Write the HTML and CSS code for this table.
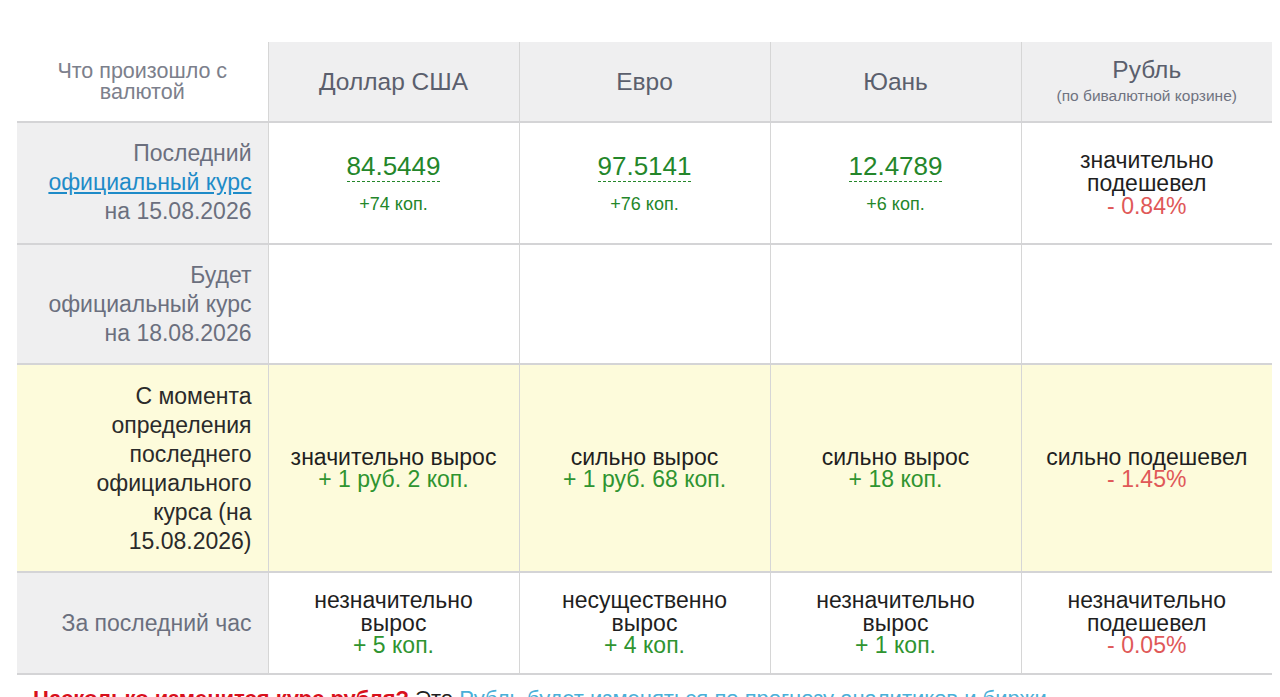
FILE: index.html
```html
<!DOCTYPE html>
<html lang="ru">
<head>
<meta charset="utf-8">
<link rel="stylesheet" href="styles.css">
</head>
<body>
<table class="rates">
  <thead>
    <tr>
      <th class="corner">Что произошло с<br>валютой</th>
      <th class="cur">Доллар США</th>
      <th class="cur">Евро</th>
      <th class="cur">Юань</th>
      <th class="cur">Рубль<span class="sub">(по бивалютной корзине)</span></th>
    </tr>
  </thead>
  <tbody>
    <tr class="row-last">
      <td class="label">Последний<br><a href="#" class="link">официальный курс</a><br>на 15.08.2026</td>
      <td class="val"><span class="rate">84.5449</span><span class="diff">+74 коп.</span></td>
      <td class="val"><span class="rate">97.5141</span><span class="diff">+76 коп.</span></td>
      <td class="val"><span class="rate">12.4789</span><span class="diff">+6 коп.</span></td>
      <td class="txt">значительно<br>подешевел<br><span class="down">- 0.84%</span></td>
    </tr>
    <tr class="row-next">
      <td class="label">Будет<br>официальный курс<br>на 18.08.2026</td>
      <td class="empty"></td>
      <td class="empty"></td>
      <td class="empty"></td>
      <td class="empty"></td>
    </tr>
    <tr class="row-since">
      <td class="label">С момента<br>определения<br>последнего<br>официального<br>курса (на<br>15.08.2026)</td>
      <td class="txt">значительно вырос<br><span class="up">+ 1 руб. 2 коп.</span></td>
      <td class="txt">сильно вырос<br><span class="up">+ 1 руб. 68 коп.</span></td>
      <td class="txt">сильно вырос<br><span class="up">+ 18 коп.</span></td>
      <td class="txt">сильно подешевел<br><span class="down">- 1.45%</span></td>
    </tr>
    <tr class="row-hour">
      <td class="label">За последний час</td>
      <td class="txt">незначительно<br>вырос<br><span class="up">+ 5 коп.</span></td>
      <td class="txt">несущественно<br>вырос<br><span class="up">+ 4 коп.</span></td>
      <td class="txt">незначительно<br>вырос<br><span class="up">+ 1 коп.</span></td>
      <td class="txt">незначительно<br>подешевел<br><span class="down">- 0.05%</span></td>
    </tr>
  </tbody>
</table>
<p class="note"><span class="warn">Насколько изменится курс рубля?</span> Это <a href="#" class="note-link">Рубль будет изменяться по прогнозу аналитиков и биржи</a></p>
</body>
</html>
```

FILE: styles.css
```css
html, body {
  margin: 0;
  padding: 0;
  background: #ffffff;
}

body {
  padding: 42px 0 0 17px;
  font-family: "Liberation Sans", Arial, sans-serif;
  overflow: hidden;
}

.rates {
  border-collapse: collapse;
  table-layout: fixed;
  width: 1255px;
}

.rates th,
.rates td {
  width: 251px;
  box-sizing: border-box;
  text-align: center;
  vertical-align: middle;
  border-left: 1px solid #d6d6d6;
  border-bottom: 2px solid #d4d4d6;
}

.rates tr > :first-child {
  border-left: none;
}

.rates th.corner {
  background: #ffffff;
  color: #7c808c;
  font-weight: normal;
  font-size: 21.5px;
  line-height: 21px;
  height: 80px;
  padding: 0 12px 0;
}

.rates th.cur {
  background: #efeff0;
  color: #5b5f6d;
  font-weight: normal;
  font-size: 24.5px;
  line-height: 26px;
  height: 80px;
  padding: 0 8px;
}

.sub {
  display: block;
  font-size: 15.5px;
  line-height: 22px;
  margin-top: 2px;
  color: #6f7380;
}

.rates td.label {
  background: #efeff0;
  color: #6b6f7e;
  text-align: right;
  font-size: 23px;
  line-height: 29px;
  padding: 16px 16px 15px 8px;
}

.row-last td.label {
  padding-top: 16px;
  padding-bottom: 17px;
}

.link {
  color: #1e8bc8;
  text-decoration: underline;
}

.row-since td {
  background: #fdfbdb;
}

.row-since td.label {
  background: #fdfbdb;
  color: #2a2a2a;
  padding-top: 17px;
}

.val {
  padding: 0 8px 0;
}

.rate {
  display: inline-block;
  font-size: 26px;
  line-height: 26px;
  color: #24862a;
  border-bottom: 1px dashed #24862a;
  padding-bottom: 2px;
}

.diff {
  display: block;
  margin-top: 12px;
  font-size: 18px;
  line-height: 20px;
  color: #24862a;
}

.txt {
  color: #1f1f1f;
  font-size: 23px;
  line-height: 23px;
  padding: 0 8px;
}

.row-last .txt {
  padding-top: 1px;
}

.row-since .txt {
  line-height: 22px;
}

.row-hour td.txt {
  line-height: 22.5px;
  padding: 16px 8px 16px;
}

.up {
  color: #2f9430;
}

.down {
  color: #e05858;
}

.empty {
  background: #ffffff;
}

.note {
  margin: 11px 0 0 16px;
  font-size: 22px;
  line-height: 26px;
  color: #1f1f1f;
  white-space: nowrap;
}

.warn {
  color: #d8101c;
  font-weight: bold;
}

.note-link {
  color: #4ab0d8;
  text-decoration: none;
}
```
